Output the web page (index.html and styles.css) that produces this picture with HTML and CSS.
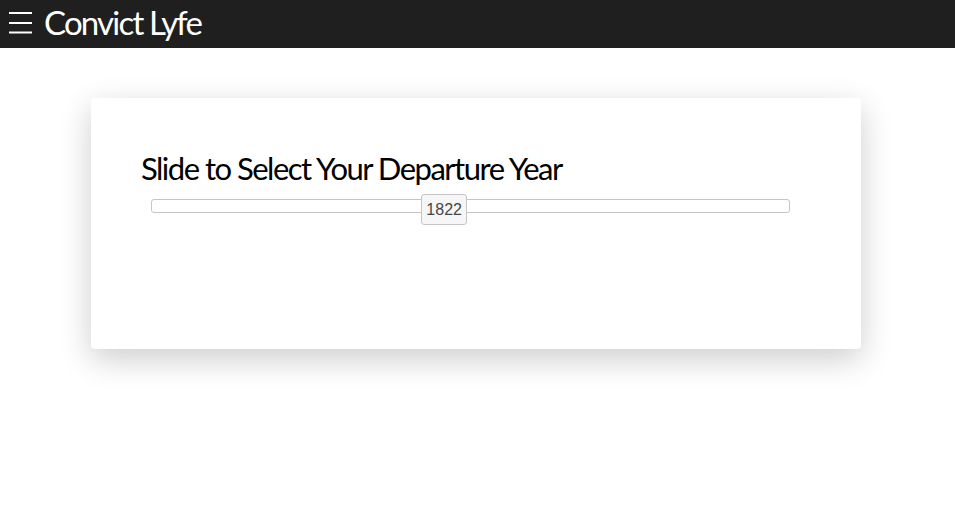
FILE: index.html
```html
<!DOCTYPE html>
<html>
<head>
<meta charset="utf-8">
<title>Convict Lyfe</title>
<link rel="stylesheet" href="styles.css">
</head>
<body>
<header class="topbar">
  <svg class="menu-icon" width="23" height="22" viewBox="0 0 23 22" aria-hidden="true">
    <rect x="0" y="0" width="23" height="2" fill="#ffffff"/>
    <rect x="0" y="10" width="23" height="2" fill="#ffffff"/>
    <rect x="0" y="19.5" width="23" height="2" fill="#ffffff"/>
  </svg>
  <span class="brand">Convict Lyfe</span>
</header>
<main class="page">
  <section class="card">
    <h2 class="card-title">Slide to Select Your Departure Year</h2>
    <div class="slider">
      <div class="slider-track">
        <span class="slider-handle" style="left: 42.25%">1822</span>
      </div>
    </div>
  </section>
</main>
</body>
</html>
```

FILE: styles.css
```css
html, body {
  margin: 0;
  padding: 0;
  background: #ffffff;
}

body {
  min-height: 100vh;
  font-family: Lato, "Liberation Sans", Arial, sans-serif;
}

.topbar {
  height: 48px;
  background: #1f1f1f;
  color: #ffffff;
  display: flex;
  align-items: center;
  padding-left: 9px;
  box-sizing: border-box;
}

.menu-icon {
  display: block;
  margin-top: -2px;
  margin-right: 12px;
}

.brand {
  font-size: 33px;
  line-height: 1;
  letter-spacing: -1.8px;
  margin-top: -3px;
}

.page {
  padding-top: 50px;
}

.card {
  width: 770px;
  height: 251px;
  margin-left: 91px;
  box-sizing: border-box;
  background: #ffffff;
  border-radius: 4px;
  box-shadow: 0 10px 32px rgba(0, 0, 0, 0.2);
  padding: 50px 50px 0 50px;
}

.card-title {
  margin: 0;
  font-weight: normal;
  font-size: 31px;
  line-height: 40px;
  color: #000000;
  letter-spacing: -1.5px;
}

.slider {
  margin: 11px 21px 0 10px;
}

.slider-track {
  position: relative;
  height: 14px;
  border: 1px solid #c5c5c5;
  border-radius: 3px;
  background: #ffffff;
  box-sizing: border-box;
}

.slider-handle {
  position: absolute;
  top: -6px;
  width: 46px;
  height: 31px;
  box-sizing: border-box;
  border: 1px solid #c5c5c5;
  border-radius: 3px;
  background: #f6f6f6;
  color: #454545;
  font-family: "Liberation Sans", Arial, sans-serif;
  font-size: 16px;
  line-height: 29px;
  text-align: center;
}
```
